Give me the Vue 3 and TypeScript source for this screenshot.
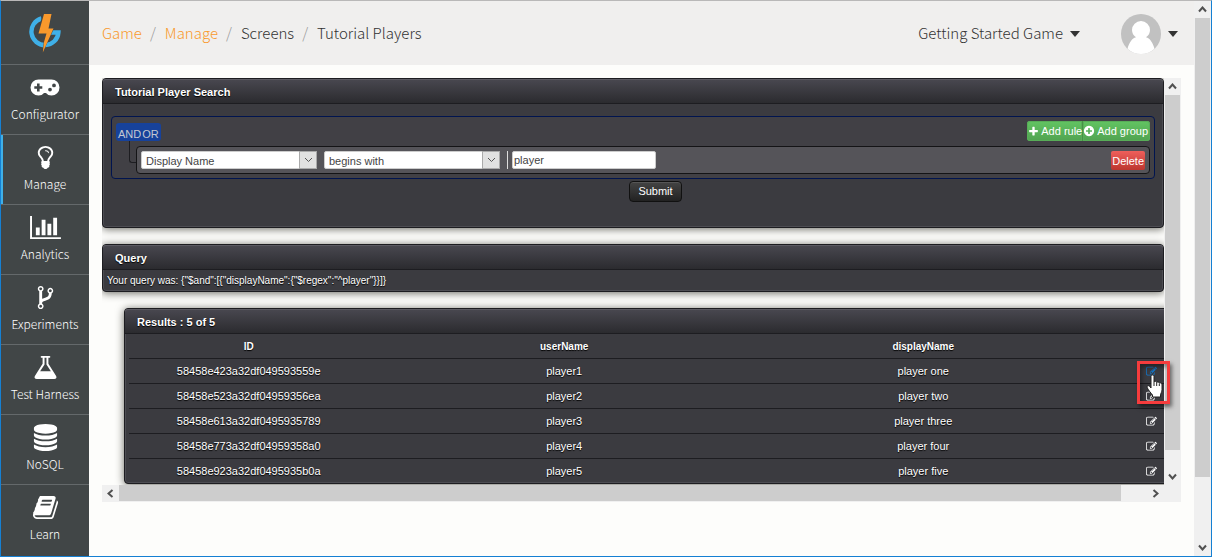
<script setup lang="ts">
import { ref } from 'vue'

interface NavItem {
  label: string
  viewBox: string
  width: number
  path: string
}

interface Player {
  id: string
  userName: string
  displayName: string
}

const navItems: NavItem[] = [
  {
    label: 'Configurator',
    viewBox: '0 0 30 27',
    width: 30,
    path: 'M8.500 5.500h13a8 8 0 0 1 0 16c-2.300 0-4.200-.8-5.500-2.500h-2c-1.300 1.700-3.200 2.500-5.500 2.500a8 8 0 0 1 0-16zM7 9.500v2.700H4.300v2.600H7v2.700h2.600v-2.700h2.700v-2.600H9.600V9.500zM20 13.700a1.900 1.900 0 1 0 0 3.800 1.900 1.900 0 0 0 0-3.800zM24 9.500a1.900 1.900 0 1 0 0 3.800 1.900 1.900 0 0 0 0-3.800z',
  },
  {
    label: 'Manage',
    viewBox: '0 0 1792 1792',
    width: 27,
    path: 'M1120 576q0 13-9.500 22.500t-22.500 9.500-22.500-9.500-9.500-22.500q0-46-54-71t-106-25q-13 0-22.500-9.500t-9.500-22.500 9.500-22.500 22.500-9.500q50 0 99.500 16t87 54 37.500 90zm160 0q0-72-34.500-134t-90-101.500-123-62-136.500-22.500-136.500 22.500-123 62-90 101.500-34.500 134q0 101 68 180 10 11 30.500 33t30.500 33q128 153 141 298h228q13-145 141-298 10-11 30.500-33t30.500-33q68-79 68-180zm128 0q0 155-103 268-45 49-74.500 87t-59.500 95.500-34 107.500q47 28 47 82 0 37-25 64 25 27 25 64 0 52-45 81 13 23 13 47 0 46-31.500 71t-77.500 25q-20 44-60 70t-87 26-87-26-60-70q-46 0-77.500-25t-31.500-71q0-24 13-47-45-29-45-81 0-37 25-64-25-27-25-64 0-54 47-82-4-50-34-107.500t-59.500-95.500-74.500-87q-103-113-103-268 0-99 44.500-184.500t117-142 164-89 186.500-32.500 186.500 32.500 164 89 117 142 44.500 184.500z',
  },
  {
    label: 'Analytics',
    viewBox: '0 0 2048 1792',
    width: 31,
    path: 'M640 896v512h-256v-512h256zm384-512v1024h-256v-1024h256zm1024 1152v128h-2048v-1536h128v1408h1920zm-640-896v768h-256v-768h256zm384-384v1152h-256v-1152h256z',
  },
  {
    label: 'Experiments',
    viewBox: '0 0 1792 1792',
    width: 27,
    path: 'M672 1472q0-40-28-68t-68-28-68 28-28 68 28 68 68 28 68-28 28-68zm0-1152q0-40-28-68t-68-28-68 28-28 68 28 68 68 28 68-28 28-68zm640 128q0-40-28-68t-68-28-68 28-28 68 28 68 68 28 68-28 28-68zm96 0q0 52-26 96.500t-70 69.500q-2 287-226 414-67 38-203 81-128 40-169.500 71t-41.500 100v26q44 25 70 69.500t26 96.500q0 80-56 136t-136 56-136-56-56-136q0-52 26-96.500t70-69.500v-820q-44-25-70-69.500t-26-96.500q0-80 56-136t136-56 136 56 56 136q0 52-26 96.500t-70 69.500v497q54-26 154-57 55-17 87.500-29.500t70.500-31 59-39.500 40.500-51 28-69.500 8.500-91.500q-44-25-70-69.500t-26-96.500q0-80 56-136t136-56 136 56 56 136z',
  },
  {
    label: 'Test Harness',
    viewBox: '0 0 1792 1792',
    width: 27,
    path: 'M1591 1448q56 89 21.500 152.500t-140.500 63.500h-1152q-106 0-140.500-63.500t21.500-152.500l503-793v-399h-64q-26 0-45-19t-19-45 19-45 45-19h512q26 0 45 19t19 45-19 45-45 19h-64v399zm-779-725l-272 429h712l-272-429-20-31v-436h-128v436z',
  },
  {
    label: 'NoSQL',
    viewBox: '0 0 1792 1792',
    width: 27,
    path: 'M896 768q237 0 443-43t325-127v170q0 69-103 128t-280 93.500-385 34.500-385-34.500-280-93.500-103-128v-170q119 84 325 127t443 43zm0 768q237 0 443-43t325-127v170q0 69-103 128t-280 93.500-385 34.500-385-34.500-280-93.500-103-128v-170q119 84 325 127t443 43zm0-384q237 0 443-43t325-127v170q0 69-103 128t-280 93.500-385 34.500-385-34.500-280-93.500-103-128v-170q119 84 325 127t443 43zm0-1152q208 0 385 34.500t280 93.500 103 128v128q0 69-103 128t-280 93.500-385 34.500-385-34.500-280-93.500-103-128v-128q0-69 103-128t280-93.500 385-34.500z',
  },
  {
    label: 'Learn',
    viewBox: '0 0 1792 1792',
    width: 27,
    path: 'M1703 478q40 57 18 129l-275 906q-19 64-76.500 107.500t-122.500 43.500h-923q-77 0-148.500-53.500t-99.500-131.500q-24-67-2-127 0-4 3-27t4-37q1-8-3-21.500t-3-19.500q2-11 8-21t16.500-23.500 16.500-23.500q23-38 45-91.500t30-91.500q3-10 .5-30t-.5-28q3-11 17-28t17-23q21-36 42-92t25-90q1-9-2.500-32t.5-28q4-13 22-30.500t22-22.500q19-26 42.500-84.500t27.500-96.500q1-8-3-25.500t-2-26.500q2-8 9-18t18-23 17-21q8-12 16.500-30.500t15-35 16-36 19.500-32 26.500-23.500 36-11.500 47.500 5.500l-1 3q38-9 51-9h761q74 0 114 56t18 130l-274 906q-36 119-71.500 153.500t-128.500 34.500h-869q-27 0-38 15-11 16-1 43 24 70 144 70h923q29 0 56-15.500t35-41.500l300-987q7-22 5-57 38 15 59 43zm-1064 2q-4 13 2 22.500t20 9.500h608q13 0 25.500-9.500t16.500-22.500l21-64q4-13-2-22.500t-20-9.500h-608q-13 0-25.500 9.500t-16.500 22.500zm-83 256q-4 13 2 22.500t20 9.500h608q13 0 25.500-9.500t16.500-22.500l21-64q4-13-2-22.500t-20-9.500h-608q-13 0-25.500 9.500t-16.500 22.500z',
  },
]

const editPath =
  'M888 1184l116-116-152-152-116 116v56h96v96h56zm440-720q-16-16-33 1l-350 350q-17 17-1 33t33-1l350-350q17-17 1-33zm80 594v190q0 119-84.500 203.500t-203.500 84.500h-832q-119 0-203.500-84.500t-84.500-203.500v-832q0-119 84.500-203.500t203.500-84.500h832q63 0 117 25 15 7 18 23 3 17-9 29l-49 49q-14 14-32 8-23-6-45-6h-832q-66 0-113 47t-47 113v832q0 66 47 113t113 47h832q66 0 113-47t47-113v-126q0-13 9-22l64-64q15-15 35-7t20 29zm-96-738l288 288-672 672h-288v-288zm444 132l-92 92-288-288 92-92q28-28 68-28t68 28l152 152q28 28 28 68t-28 68z'
const plusPath =
  'M1600 736v192q0 40-28 68t-68 28h-416v416q0 40-28 68t-68 28h-192q-40 0-68-28t-28-68v-416h-416q-40 0-68-28t-28-68v-192q0-40 28-68t68-28h416v-416q0-40 28-68t68-28h192q40 0 68 28t28 68v416h416q40 0 68 28t28 68z'
const plusCirclePath =
  'M1344 960v-128q0-26-19-45t-45-19h-256v-256q0-26-19-45t-45-19h-128q-26 0-45 19t-19 45v256h-256q-26 0-45 19t-19 45v128q0 26 19 45t45 19h256v256q0 26 19 45t45 19h128q26 0 45-19t19-45v-256h256q26 0 45-19t19-45zm320-64q0 209-103 385.500t-279.500 279.500-385.500 103-385.500-103-279.500-279.500-103-385.500 103-385.500 279.500-279.500 385.500-103 385.500 103 279.500 279.500 103 385.500z'

const active = ref('Manage')
const field = ref('Display Name')
const operator = ref('begins with')
const term = ref('player')

const players: Player[] = [
  { id: '58458e423a32df049593559e', userName: 'player1', displayName: 'player one' },
  { id: '58458e523a32df04959356ea', userName: 'player2', displayName: 'player two' },
  { id: '58458e613a32df0495935789', userName: 'player3', displayName: 'player three' },
  { id: '58458e773a32df04959358a0', userName: 'player4', displayName: 'player four' },
  { id: '58458e923a32df0495935b0a', userName: 'player5', displayName: 'player five' },
]
const queryText = '{"$and":[{"displayName":{"$regex":"^player"}}]}'
</script>

<template>
  <div class="window">
    <nav class="sidebar">
      <a class="logo" href="#" aria-label="Home">
        <svg width="32" height="40" viewBox="0 0 32 40">
          <path d="M12.500 5.500A13.500 13.500 0 1 0 29.400 19.500H19" fill="none" stroke="#3fb0e8" stroke-width="4.400" />
          <path d="M14 0h9.500L20.500 14.500h5L13.500 40l1.500-13 0-5.500H8z" fill="#414647" />
          <path d="M15 1h7.500L19.500 15.500h5L13.800 39.500 15 29l2.500-8.500H9.500z" fill="#f9992c" />
        </svg>
      </a>
      <a
        v-for="item in navItems"
        :key="item.label"
        class="nav-item"
        :class="{ active: active === item.label }"
        href="#"
        @click.prevent="active = item.label"
      >
        <svg :width="item.width" height="27" :viewBox="item.viewBox" fill="currentColor" fill-rule="evenodd">
          <path :d="item.path" />
        </svg>
        <span>{{ item.label }}</span>
      </a>
    </nav>

    <main class="main">
      <header class="topbar">
        <ol class="crumbs">
          <li><a href="#">Game</a></li>
          <li><a href="#">Manage</a></li>
          <li>Screens</li>
          <li>Tutorial Players</li>
        </ol>
        <button class="menu" type="button"><span>Getting Started Game</span> <i class="caret"></i></button>
        <button class="menu user" type="button" aria-label="Account">
          <svg width="40" height="40" viewBox="0 0 40 40">
            <circle cx="20" cy="20" r="20" fill="#c1c1c1" />
            <path d="M20 40a20 20 0 0 1-13.500-5.300C8.500 28 11 24.500 15 23.300A9 9 0 0 1 11 16a9 9 0 0 1 18 0 9 9 0 0 1-4 7.300c4 1.200 6.500 4.700 8.500 11.400A20 20 0 0 1 20 40z" fill="#fff" />
          </svg>
          <i class="caret"></i>
        </button>
      </header>

      <div class="frame">
        <div class="viewport">
          <section class="panel search">
            <h2>Tutorial Player Search</h2>
            <div class="search-body">
              <div class="group">
                <div class="group-head">
                  <div class="joined">
                    <button class="cond" type="button">AND</button><button class="cond" type="button">OR</button>
                  </div>
                  <div class="joined">
                    <button class="add" type="button">
                      <svg width="11" height="11" viewBox="0 0 1792 1792" fill="currentColor"><path :d="plusPath" /></svg>
                      Add rule
                    </button>
                    <button class="add" type="button">
                      <svg width="12" height="12" viewBox="0 0 1792 1792" fill="currentColor"><path :d="plusCirclePath" /></svg>
                      Add group
                    </button>
                  </div>
                </div>
                <div class="rule-row">
                  <span class="branch"></span>
                  <div class="rule">
                    <span class="select">
                      <select v-model="field" aria-label="Field">
                        <option>Display Name</option>
                        <option>User Name</option>
                      </select>
                      <span class="arrow"><svg width="9" height="6" viewBox="0 0 9 6"><path d="M1 1l3.500 3.500L8 1" /></svg></span>
                    </span>
                    <span class="select">
                      <select v-model="operator" aria-label="Operator">
                        <option>begins with</option>
                        <option>equal</option>
                      </select>
                      <span class="arrow"><svg width="9" height="6" viewBox="0 0 9 6"><path d="M1 1l3.500 3.500L8 1" /></svg></span>
                    </span>
                    <span class="divider"></span>
                    <input v-model="term" type="text" aria-label="Value" />
                    <button class="delete" type="button">Delete</button>
                  </div>
                </div>
              </div>
              <button class="submit" type="button">Submit</button>
            </div>
          </section>

          <section class="panel">
            <h2>Query</h2>
            <p>Your query was: {{ queryText }}</p>
          </section>

          <section class="panel results">
            <h2>Results : 5 of 5</h2>
            <table>
              <colgroup>
                <col class="c-id" />
                <col class="c-user" />
                <col class="c-display" />
                <col class="c-edit" />
              </colgroup>
              <thead>
                <tr>
                  <th>ID</th>
                  <th>userName</th>
                  <th>displayName</th>
                  <th></th>
                </tr>
              </thead>
              <tbody>
                <tr v-for="(p, i) in players" :key="p.id">
                  <td>{{ p.id }}</td>
                  <td>{{ p.userName }}</td>
                  <td>{{ p.displayName }}</td>
                  <td>
                    <a class="edit" :class="{ hovered: i === 0 }" href="#" :aria-label="'Edit ' + p.displayName">
                      <svg width="11" height="11" viewBox="0 0 1792 1792" fill="currentColor"><path :d="editPath" /></svg>
                    </a>
                  </td>
                </tr>
              </tbody>
            </table>
          </section>
        </div>

        <div class="bar vertical inner">
          <span class="btn"><svg width="9" height="7" viewBox="0 0 9 7"><path d="M1 5.500l3.500-4 3.500 4" /></svg></span>
          <span class="thumb"></span>
          <span class="rest"></span>
          <span class="btn"><svg width="9" height="7" viewBox="0 0 9 7"><path d="M1 1.500l3.500 4 3.500-4" /></svg></span>
        </div>
        <div class="bar horizontal">
          <span class="btn"><svg width="7" height="9" viewBox="0 0 7 9"><path d="M5.500 1l-4 3.500 4 3.500" /></svg></span>
          <span class="thumb"></span>
          <span class="rest"></span>
          <span class="btn"><svg width="7" height="9" viewBox="0 0 7 9"><path d="M1.500 1l4 3.500-4 3.500" /></svg></span>
        </div>

        <div class="marker">
          <svg width="18" height="24" viewBox="0 0 18 24">
            <path d="M5 2.500C5 .5 8 .5 8 2.500V8c.5-1 2.500-.8 2.700.5.8-1 2.300-.6 2.600.6 1-.7 2.700 0 2.700 1.700v5c0 2-1.200 3.400-1.500 5V23H6.500v-2C5 19 2.500 16.500 1.300 13.800.5 12 2.500 11 3.600 12.300L5 14z" fill="#fff" stroke="#222" stroke-width="1" />
            <path d="M8 8v4M10.700 8.500V12M13.300 9.500V12" fill="none" stroke="#222" stroke-width="1" />
          </svg>
        </div>
      </div>
    </main>

    <div class="bar vertical outer">
      <span class="btn"><svg width="9" height="7" viewBox="0 0 9 7"><path d="M1 5.500l3.500-4 3.500 4" /></svg></span>
      <span class="thumb"></span>
      <span class="rest"></span>
      <span class="btn"><svg width="9" height="7" viewBox="0 0 9 7"><path d="M1 1.500l3.500 4 3.500-4" /></svg></span>
    </div>
  </div>
</template>

<style>
body {
  margin: 0;
}
</style>

<style scoped>
* {
  box-sizing: border-box;
}
.window {
  display: flex;
  height: 100vh;
  overflow: hidden;
  border: 1px solid #1580d3;
  border-top-color: #b9b8b8;
  background: #fdfdfb;
  font-family: "Liberation Sans", Arial, sans-serif;
  font-size: 11px;
}
button,
input,
select {
  margin: 0;
  font-family: inherit;
  font-size: 11px;
}
a {
  color: inherit;
  text-decoration: none;
}
svg {
  display: block;
  flex: none;
}

.sidebar {
  flex: none;
  width: 88px;
  background: #414647;
  color: #fff;
  font-family: "Noto Sans CJK SC", "Open Sans", sans-serif;
  font-weight: 300;
}
.logo {
  display: flex;
  justify-content: center;
  height: 63px;
  padding-top: 12px;
}
.nav-item {
  display: flex;
  flex-direction: column;
  align-items: center;
  gap: 3px;
  height: 70px;
  padding-top: 9px;
  border-top: 1px solid #64696b;
  font-size: 12px;
  line-height: 20px;
}
.nav-item.active {
  box-shadow: inset 2px 0 #3fb0e8;
}

.main {
  flex: 1;
  min-width: 0;
}
.topbar {
  display: flex;
  align-items: center;
  height: 64px;
  padding: 2px 16px 0 13px;
  background: #f0efee;
  color: #333;
  font-family: "Noto Sans CJK SC", "Open Sans", sans-serif;
  font-size: 15px;
  font-weight: 300;
}
.crumbs {
  display: flex;
  flex: 1;
  margin: 0;
  padding: 0 0 4px;
  list-style: none;
}
.crumbs a {
  color: #f9992c;
}
.crumbs li + li::before {
  content: "/";
  padding: 0 9px 0 8px;
  color: #999;
}
.menu {
  display: flex;
  align-items: center;
  gap: 7px;
  padding: 0;
  border: 0;
  background: none;
  color: #333;
  font-size: 15px;
  font-weight: 300;
}
.menu span {
  padding-bottom: 4px;
}
.user {
  margin-left: 41px;
}
.caret {
  border: 5px solid transparent;
  border-top: 6px solid #333;
  border-bottom: 0;
}

.frame {
  position: relative;
  display: grid;
  grid-template-columns: minmax(0, 1fr) 17px;
  margin: 13px 13px 0;
}
.viewport {
  overflow: hidden;
  padding-bottom: 1px;
}
.panel {
  margin-bottom: 16px;
  border: 1px solid #1d1d21;
  border-radius: 4px;
  background: #3b3b40;
  box-shadow: 0 1px 9px #66665f, inset 0 0 0 1px #4d4d53;
  color: #fff;
  text-shadow: 0 1px 1px #000;
}
.panel h2 {
  margin: 0;
  height: 25px;
  padding: 1px 0 0 12px;
  border-bottom: 1px solid #1d1d21;
  border-radius: 3px 3px 0 0;
  background: linear-gradient(#494850, #2b2b2f);
  box-shadow: inset 0 1px #5c5b63;
  font-size: 11px;
  line-height: 25px;
}
.panel p {
  margin: 0;
  padding-left: 4px;
  font-size: 10px;
  line-height: 21px;
}
.search-body {
  display: flex;
  flex-direction: column;
  align-items: center;
  gap: 2px;
  padding: 12px 8px 25px;
}
.group {
  align-self: stretch;
  padding: 4px;
  border: 1px solid #00144f;
  border-radius: 4px;
  background: #414045;
}
.group-head {
  display: flex;
  justify-content: space-between;
  align-items: flex-end;
}
.joined {
  display: flex;
}
.joined button:first-child {
  border-radius: 3px 0 0 3px;
}
.joined button:last-child {
  border-radius: 0 3px 3px 0;
}
.cond {
  height: 18px;
  padding: 3px 0 0 2px;
  border: 0;
  background: #17429b;
  color: #c3c8d2;
  text-shadow: none;
  line-height: 14px;
}
.cond:last-child {
  padding-right: 2px;
  padding-left: 1px;
}
.add {
  display: flex;
  align-items: center;
  gap: 2px;
  height: 20px;
  padding: 0 2px 0 1px;
  border: 0;
  background: linear-gradient(#62c462, #51a351);
  box-shadow: inset 0 0 0 1px #58ad58;
  color: #fff;
}
.add:first-child {
  padding-right: 0;
  border-right: 1px solid #469246;
}
.add:last-child {
  padding-left: 0;
}
.rule-row {
  display: flex;
  margin-top: 5px;
}
.branch {
  width: 7px;
  height: 22px;
  margin: -5px 0 0 13px;
  border: solid #1d1d21;
  border-width: 0 0 1px 1px;
  border-radius: 0 0 0 3px;
}
.rule {
  display: flex;
  flex: 1;
  align-items: center;
  height: 28px;
  padding: 0 4px;
  border: 1px solid #141416;
  border-radius: 4px;
  background: #555459;
}
.select {
  display: grid;
  width: 176px;
  height: 18px;
  margin-right: 7px;
}
.select select {
  grid-area: 1 / 1;
  padding: 2px 4px 0;
  border: 1px solid #ccc;
  border-radius: 2px;
  appearance: none;
  background: #fff;
  color: #444;
}
.arrow {
  grid-area: 1 / 1;
  display: grid;
  place-items: center;
  justify-self: end;
  width: 18px;
  border: 1px solid #aaa;
  background: #e1e1e1;
  pointer-events: none;
}
.arrow path {
  fill: none;
  stroke: #555;
}
.divider {
  width: 1px;
  height: 18px;
  margin-right: 4px;
  background: #ddd;
}
.rule input {
  width: 144px;
  height: 18px;
  padding: 0 1px;
  border: 1px solid #ccc;
  border-radius: 2px;
  background: #fff;
  color: #444;
}
.delete {
  height: 19px;
  margin-left: auto;
  padding: 1px 1px 0;
  border: 0;
  border-radius: 2px;
  background: linear-gradient(#ee5f5b, #bd362f);
  color: #fff;
}
.submit {
  height: 21px;
  margin-left: 45px;
  padding: 0 8px 2px;
  border: 1px solid #111;
  border-radius: 4px;
  background: linear-gradient(#444, #222);
  box-shadow: inset 0 1px #565656;
  color: #fff;
}
.results {
  margin: 0 -58px 0 22px;
}
table {
  width: 100%;
  padding: 0 4px;
  border-collapse: separate;
  border-spacing: 0;
  table-layout: fixed;
  font-size: 11px;
}
.c-id {
  width: 22%;
}
.c-user {
  width: 36%;
}
.c-display {
  width: 30%;
}
th,
td {
  height: 25px;
  padding: 0;
  border-bottom: 1px solid #1d1d21;
  text-align: center;
}
th {
  font-size: 10px;
}
tbody tr:last-child td {
  height: 24px;
  border-bottom: 0;
}
.edit {
  display: flex;
  justify-content: center;
}
.edit.hovered {
  color: #1474c4;
}

.bar {
  display: flex;
  background: #f0f0f0;
}
.vertical {
  flex-direction: column;
  width: 17px;
}
.horizontal {
  grid-column: 1 / 3;
  height: 17px;
  padding-right: 17px;
}
.outer {
  flex: none;
}
.btn {
  display: grid;
  place-items: center;
  flex: none;
  width: 17px;
  height: 17px;
}
.btn path {
  fill: none;
  stroke: #505050;
  stroke-width: 2;
}
.thumb {
  margin: 0 1px;
  background: #cdcdcd;
}
.horizontal .thumb {
  margin: 0 0 1px;
  flex: 1002;
}
.horizontal .rest {
  flex: 26;
}
.inner .thumb {
  flex: 354;
}
.inner .rest {
  flex: 18;
}
.outer .thumb {
  flex: 459;
}
.outer .rest {
  flex: 62;
}
.marker {
  position: absolute;
  top: 283px;
  right: 11px;
  width: 33px;
  height: 43px;
  padding: 10px 0 0 6px;
  border: 3px solid #f63c3d;
  box-shadow: 2px 3px 4px rgba(0, 0, 0, 0.5), inset 2px 3px 4px rgba(0, 0, 0, 0.4);
}
</style>
